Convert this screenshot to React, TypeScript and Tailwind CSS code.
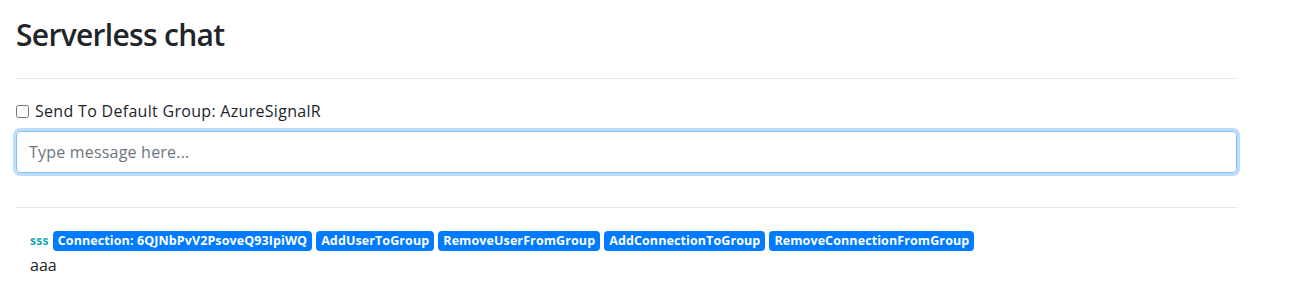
import React from "react";

const BADGES = [
  "Connection: 6QJNbPvV2PsoveQ93IpiWQ",
  "AddUserToGroup",
  "RemoveUserFromGroup",
  "AddConnectionToGroup",
  "RemoveConnectionFromGroup",
];

const App = () => {
  return (
    <div className="min-h-[299px] w-full bg-white font-['Segoe_UI','Open_Sans',sans-serif] text-[#212529]">
      <div className="ml-4 w-[1221px] pt-[16px]">
        <h2 className="text-[30px] font-semibold leading-[37px] tracking-[-0.7px]">Serverless chat</h2>

        <hr className="mt-[25px] border-t border-black/10" />

        {/* Group toggle */}
        <label className="mt-[20px] flex items-center gap-[6px] text-base leading-6 tracking-[0.3px]">
          <input type="checkbox" className="h-[13px] w-[13px]" />
          <span>Send To Default Group: AzureSignalR</span>
        </label>

        <input
          type="text"
          placeholder="Type message here..."
          className="mt-[8px] block h-[42px] w-full rounded-[4px] border border-[#80bdff] px-3 text-base tracking-[0.2px] text-[#495057] shadow-[0_0_0_3px_rgba(0,123,255,0.25)] outline-none placeholder:text-[#6c757d]"
        />

        <hr className="mt-[34px] border-t border-black/10" />

        {/* Messages */}
        <div className="mt-[21px] px-[14px]">
          <div className="flex h-6 flex-wrap items-center gap-[4px]">
            <span className="text-xs font-bold text-[#17a2b8] tracking-[0.3px]">sss</span>
            {BADGES.map((b) => (
              <span
                key={b}
                className="rounded-[4px] bg-[#007bff] px-[5px] py-[4px] text-[12.5px] leading-none font-bold tracking-[0.1px] text-white"
              >
                {b}
              </span>
            ))}
          </div>
          <div className="text-base leading-6">aaa</div>
        </div>
      </div>
    </div>
  );
};

export default App;
